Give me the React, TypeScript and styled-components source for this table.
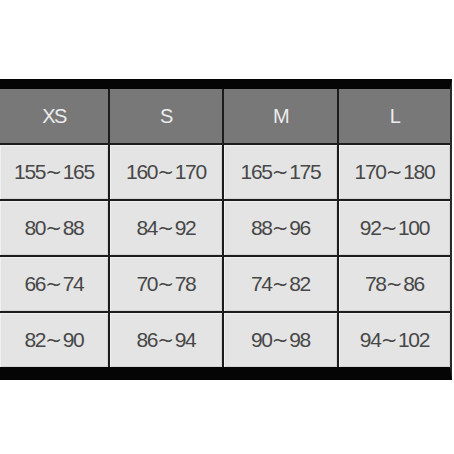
import React from "react";
import styled, { createGlobalStyle } from "styled-components";

const Global = createGlobalStyle`
  html, body { margin: 0; padding: 0; background: #ffffff; }
  body { width: 454px; height: 454px; overflow: hidden; }
`;

const Page = styled.div`
  padding-top: 79px;
  width: 454px;
`;

const Table = styled.div`
  width: 452px;
  box-sizing: border-box;
  display: grid;
  grid-template-columns: 108px 112px 113px 111px;
  grid-auto-rows: 54px;
  gap: 2px;
  background: #1c1c1c;
  border-top: 10px solid #050505;
  border-bottom: 13px solid #050505;
  border-right: 2px solid #2a2a2a;
  font-family: "Liberation Sans", Arial, sans-serif;
`;

const HeadCell = styled.div`
  display: flex;
  align-items: center;
  justify-content: center;
  background: #787878;
  color: #ececec;
  font-size: 20px;
  letter-spacing: -1.5px;
  padding-top: 1px;
`;

const Cell = styled.div`
  display: flex;
  align-items: center;
  justify-content: center;
  background: #e4e4e4;
  color: #474747;
  font-size: 21px;
  letter-spacing: -1.2px;
  padding-bottom: 1px;
  box-shadow: inset 1px 1px 0 #f0f0f0, inset -1px -1px 0 #d4d4d4;
`;

const Tilde = styled.span`
  font-family: "DejaVu Sans", sans-serif;
  font-size: 20px;
  letter-spacing: -0.5px;
  margin: 0 1px 0 0;
`;

const sizes = ["XS", "S", "M", "L"];
const rows = [
  ["155~165", "160~170", "165~175", "170~180"],
  ["80~88", "84~92", "88~96", "92~100"],
  ["66~74", "70~78", "74~82", "78~86"],
  ["82~90", "86~94", "90~98", "94~102"],
];

function Range({ value }: { value: string }) {
  const [a, b] = value.split("~");
  return (
    <span>
      {a}
      <Tilde>~</Tilde>
      {b}
    </span>
  );
}

export default function App() {
  return (
    <>
      <Global />
      <Page>
        <Table>
          {sizes.map((s) => (
            <HeadCell key={s}>{s}</HeadCell>
          ))}
          {rows.map((r, i) =>
            r.map((v, j) => (
              <Cell key={`${i}-${j}`}>
                <Range value={v} />
              </Cell>
            ))
          )}
        </Table>
      </Page>
    </>
  );
}
